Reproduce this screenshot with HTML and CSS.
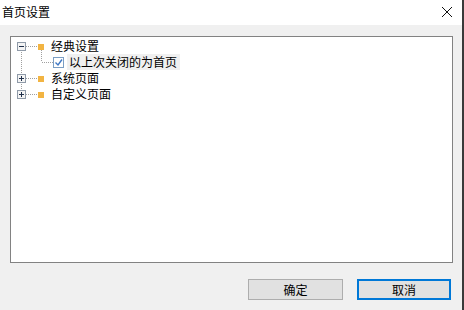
FILE: index.html
```html
<!DOCTYPE html>
<html lang="zh-CN">
<head>
<meta charset="utf-8">
<title>首页设置</title>
<link rel="stylesheet" href="styles.css">
</head>
<body>
<div class="dialog">
  <div class="titlebar">
    <span class="title">首页设置</span>
    <svg class="close" width="12" height="12" viewBox="0 0 12 12"><path d="M1 1 L11 11 M11 1 L1 11" stroke="#111" stroke-width="1" fill="none"/></svg>
  </div>
  <div class="content">
    <div class="tree">
      <div class="row">
        <svg class="gut" width="40" height="16" viewBox="0 0 40 16">
          <line x1="10.5" y1="14" x2="10.5" y2="16" class="dot"/>
          <line x1="15" y1="8.5" x2="26" y2="8.5" class="dot"/>
          <line x1="30.5" y1="12" x2="30.5" y2="16" class="dot"/>
          <rect x="6.5" y="4.5" width="8" height="8" class="box"/>
          <line x1="8" y1="8.5" x2="13" y2="8.5" class="sign"/>
          <rect x="27" y="6" width="6" height="6" class="sq"/>
        </svg>
        <span class="label">经典设置</span>
      </div>
      <div class="row">
        <svg class="gut" width="56" height="16" viewBox="0 0 56 16">
          <line x1="10.5" y1="0" x2="10.5" y2="16" class="dot"/>
          <line x1="30.5" y1="0" x2="30.5" y2="8" class="dot"/>
          <line x1="31" y1="8.5" x2="42" y2="8.5" class="dot"/>
          <rect x="42.5" y="3.5" width="10" height="10" class="cb"/>
          <path d="M44.5 8.5 L47 11 L51 5.5" class="check"/>
        </svg>
        <span class="label sel">以上次关闭的为首页</span>
      </div>
      <div class="row">
        <svg class="gut" width="40" height="16" viewBox="0 0 40 16">
          <line x1="10.5" y1="0" x2="10.5" y2="4" class="dot"/>
          <line x1="10.5" y1="14" x2="10.5" y2="16" class="dot"/>
          <line x1="15" y1="8.5" x2="26" y2="8.5" class="dot"/>
          <rect x="6.5" y="4.5" width="8" height="8" class="box"/>
          <line x1="8" y1="8.5" x2="13" y2="8.5" class="sign"/>
          <line x1="10.5" y1="6" x2="10.5" y2="11" class="sign"/>
          <rect x="27" y="6" width="6" height="6" class="sq"/>
        </svg>
        <span class="label">系统页面</span>
      </div>
      <div class="row">
        <svg class="gut" width="40" height="16" viewBox="0 0 40 16">
          <line x1="10.5" y1="0" x2="10.5" y2="4" class="dot"/>
          <line x1="15" y1="8.5" x2="26" y2="8.5" class="dot"/>
          <rect x="6.5" y="4.5" width="8" height="8" class="box"/>
          <line x1="8" y1="8.5" x2="13" y2="8.5" class="sign"/>
          <line x1="10.5" y1="6" x2="10.5" y2="11" class="sign"/>
          <rect x="27" y="6" width="6" height="6" class="sq"/>
        </svg>
        <span class="label">自定义页面</span>
      </div>
    </div>
    <div class="buttons">
      <button class="btn">确定</button>
      <button class="btn default">取消</button>
    </div>
  </div>
</div>
<div class="edge"></div>
</body>
</html>
```

FILE: styles.css
```css
html, body {
  margin: 0;
  padding: 0;
}
body {
  width: 464px;
  height: 310px;
  display: flex;
  overflow: hidden;
  font-family: "Noto Sans CJK SC", "Noto Sans", sans-serif;
  font-size: 12px;
  color: #000;
}
.dialog {
  width: 462px;
  display: flex;
  flex-direction: column;
}
.edge {
  width: 2px;
  background: #3a3a3a;
}
.titlebar {
  height: 25px;
  background: #fff;
  display: flex;
  align-items: center;
  justify-content: space-between;
  padding: 0 9px 0 2px;
}
.title {
  font-size: 12px;
  line-height: 16px;
  margin-top: -1px;
}
.close {
  display: block;
  margin-top: -1px;
}
.content {
  flex: 1;
  background: #f0f0f0;
  padding: 11px 0 0 10px;
}
.tree {
  width: 441px;
  height: 224px;
  border: 1px solid #828282;
  background: #fff;
  padding-top: 1px;
  box-sizing: content-box;
}
.row {
  display: flex;
  align-items: center;
  height: 16px;
}
.gut {
  display: block;
  flex: none;
  shape-rendering: crispEdges;
}
.dot {
  stroke: #a0a0a0;
  stroke-width: 1;
  stroke-dasharray: 1 1;
}
.box {
  fill: #f4f4f4;
  stroke: #8f9aa8;
  stroke-width: 1;
}
.sign {
  stroke: #1f2f4a;
  stroke-width: 1;
}
.sq {
  fill: #f2b443;
}
.cb {
  fill: #fff;
  stroke: #7b9ec4;
  stroke-width: 1;
}
.check {
  fill: none;
  stroke: #3f78c4;
  stroke-width: 1.4;
  shape-rendering: geometricPrecision;
}
.label {
  line-height: 16px;
  white-space: nowrap;
}
.sel {
  background: #f0f0f0;
  padding: 0 3px 0 2px;
}
.buttons {
  display: flex;
  gap: 14px;
  margin-top: 16px;
  padding-left: 238px;
}
.btn {
  width: 95px;
  height: 21px;
  margin: 0;
  padding: 0;
  border: 1px solid #adadad;
  background: #e1e1e1;
  font-family: "Noto Sans CJK SC", "Noto Sans", sans-serif;
  font-size: 12px;
  line-height: 16px;
  color: #000;
}
.btn.default {
  width: 94px;
  border: 2px solid #0078d7;
}
```
